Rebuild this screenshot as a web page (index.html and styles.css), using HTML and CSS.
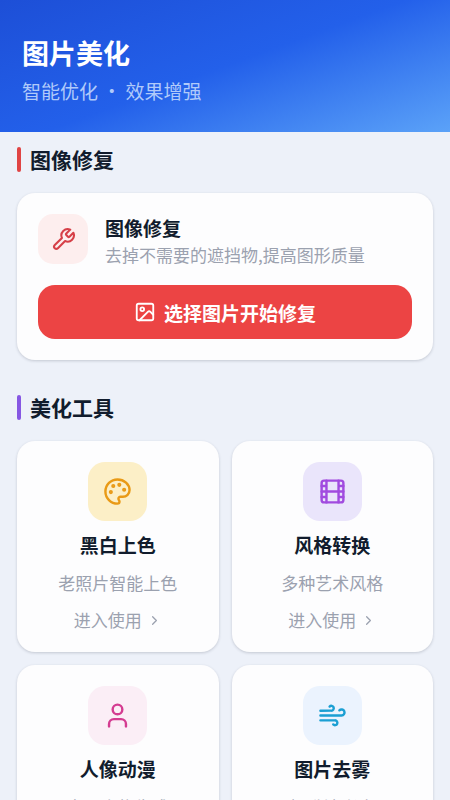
FILE: index.html
```html
<!DOCTYPE html>
<html lang="zh-CN">
<head>
<meta charset="utf-8">
<meta name="viewport" content="width=device-width, initial-scale=1">
<title>图片美化</title>
<link rel="stylesheet" href="styles.css">
</head>
<body>
<header class="hero">
  <h1>图片美化</h1>
  <p>智能优化 · 效果增强</p>
</header>
<main class="content">
  <section class="section">
    <h2 class="section-title repair">图像修复</h2>
    <div class="card repair-card">
      <div class="repair-head">
        <span class="icon-box small red"><svg viewBox="0 0 24 24"><path d="M14.7 6.3a1 1 0 0 0 0 1.4l1.6 1.6a1 1 0 0 0 1.4 0l3.77-3.77a6 6 0 0 1-7.94 7.94l-6.91 6.91a2.12 2.12 0 0 1-3-3l6.91-6.91a6 6 0 0 1 7.94-7.94l-3.76 3.76z"/></svg></span>
        <div>
          <h3>图像修复</h3>
          <p>去掉不需要的遮挡物,提高图形质量</p>
        </div>
      </div>
      <button class="primary" type="button">
        <svg viewBox="0 0 24 24"><rect x="3" y="3" width="18" height="18" rx="2"/><circle cx="9" cy="9" r="2"/><path d="m21 15-3.086-3.086a2 2 0 0 0-2.828 0L6 21"/></svg>
        <span>选择图片开始修复</span>
      </button>
    </div>
  </section>
  <section class="section">
    <h2 class="section-title tools">美化工具</h2>
    <div class="grid">
      <a class="card tool" href="#colorize">
        <span class="icon-box amber"><svg viewBox="0 0 24 24"><circle class="dot" cx="13.5" cy="6.5" r=".7"/><circle class="dot" cx="17.5" cy="10.5" r=".7"/><circle class="dot" cx="8.5" cy="7.5" r=".7"/><circle class="dot" cx="6.5" cy="12.5" r=".7"/><path d="M12 2C6.5 2 2 6.5 2 12s4.5 10 10 10c.926 0 1.648-.746 1.648-1.688 0-.437-.18-.835-.437-1.125-.29-.289-.438-.652-.438-1.125a1.64 1.64 0 0 1 1.668-1.668h1.996c3.051 0 5.555-2.503 5.555-5.554C21.965 6.012 17.461 2 12 2z"/></svg></span>
        <h3>黑白上色</h3>
        <p>老照片智能上色</p>
        <span class="enter">进入使用<svg viewBox="0 0 24 24"><path d="m9 18 6-6-6-6"/></svg></span>
      </a>
      <a class="card tool" href="#style">
        <span class="icon-box violet"><svg viewBox="0 0 24 24"><rect x="3" y="3" width="18" height="18" rx="2"/><path d="M7 3v18M17 3v18M3 7.5h4M3 12h18M3 16.5h4M17 7.5h4M17 16.5h4"/></svg></span>
        <h3>风格转换</h3>
        <p>多种艺术风格</p>
        <span class="enter">进入使用<svg viewBox="0 0 24 24"><path d="m9 18 6-6-6-6"/></svg></span>
      </a>
      <a class="card tool" href="#anime">
        <span class="icon-box pink"><svg viewBox="0 0 24 24"><path d="M19 21v-2a4 4 0 0 0-4-4H9a4 4 0 0 0-4 4v2"/><circle cx="12" cy="7" r="4"/></svg></span>
        <h3>人像动漫</h3>
        <p>卡通人物生成</p>
        <span class="enter">进入使用<svg viewBox="0 0 24 24"><path d="m9 18 6-6-6-6"/></svg></span>
      </a>
      <a class="card tool" href="#dehaze">
        <span class="icon-box sky"><svg viewBox="0 0 24 24"><path d="M17.7 7.7a2.5 2.5 0 1 1 1.8 4.3H2"/><path d="M9.6 4.6A2 2 0 1 1 11 8H2"/><path d="M12.6 19.4A2 2 0 1 0 14 16H2"/></svg></span>
        <h3>图片去雾</h3>
        <p>提升清晰度</p>
        <span class="enter">进入使用<svg viewBox="0 0 24 24"><path d="m9 18 6-6-6-6"/></svg></span>
      </a>
    </div>
  </section>
</main>
</body>
</html>
```
FILE: styles.css
```css
* { box-sizing: border-box; }
body {
  margin: 0;
  background: #edf1f9;
  color: #111c2d;
  font-family: "Noto Sans CJK SC", sans-serif;
}
h1, h2, h3, p { margin: 0; }
svg {
  fill: none;
  stroke: currentColor;
  stroke-width: 2;
  stroke-linecap: round;
  stroke-linejoin: round;
}
.hero {
  padding: 31px 22px 25px;
  color: #fff;
  background: linear-gradient(160deg, #1d4fd7 0%, #2360ea 50%, #5ba2f8 100%);
}
.hero h1 { font-size: 27px; line-height: 44px; font-weight: 700; }
.hero p { font-size: 19px; line-height: 32px; color: #b0cafa; }
.content { padding: 12px 17px 24px; }
.section + .section { margin-top: 32px; }
.section-title {
  display: flex;
  align-items: center;
  gap: 9px;
  margin-bottom: 19px;
  font-size: 21px;
  line-height: 30px;
  font-weight: 700;
}
.section-title::before {
  content: "";
  width: 4px;
  height: 25px;
  border-radius: 2px;
  background: currentColor;
}
.repair::before { background: #e04444; }
.tools::before { background: #8657e3; }
.card {
  background: #fdfdfe;
  border-radius: 18px;
  box-shadow: 0 1px 3px rgb(30 41 59 / 20%);
}
.repair-card { padding: 21px; }
.repair-head {
  display: flex;
  align-items: flex-start;
  gap: 17px;
  margin-bottom: 17px;
}
.repair-head h3 { font-size: 19px; line-height: 28px; }
.repair-head p { font-size: 17px; line-height: 26px; color: #9ba1af; }
.icon-box {
  display: flex;
  flex: none;
  align-items: center;
  justify-content: center;
  width: 59px;
  height: 59px;
  border-radius: 17px;
}
.icon-box svg { width: 29px; height: 29px; }
.icon-box.small { width: 50px; height: 50px; border-radius: 15px; }
.icon-box.small svg { width: 25px; height: 25px; }
.red { background: #fdeeee; color: #d64048; }
.amber { background: #fcefc7; color: #e99a16; }
.violet { background: #eae5fb; color: #a14bdf; }
.pink { background: #fbeef6; color: #d43c91; }
.sky { background: #ebf3fe; color: #1b9fd3; }
.dot { fill: currentColor; }
.primary {
  display: flex;
  align-items: center;
  justify-content: center;
  gap: 8px;
  width: 100%;
  height: 54px;
  padding: 0;
  border: 0;
  border-radius: 17px;
  background: #ec4444;
  color: #fff;
  font: 700 19px/29px "Noto Sans CJK SC", sans-serif;
}
.primary svg { width: 22px; height: 22px; }
.grid {
  display: grid;
  grid-template-columns: 1fr 1fr;
  gap: 13px;
}
.tool {
  display: flex;
  flex-direction: column;
  align-items: center;
  padding: 21px 12px 19px;
  color: inherit;
  text-decoration: none;
}
.tool h3 { margin-top: 10px; font-size: 19px; line-height: 28px; }
.tool p { margin-top: 11px; font-size: 17px; line-height: 26px; color: #9ba1af; }
.enter {
  display: flex;
  align-items: center;
  gap: 5px;
  margin-top: 11px;
  font-size: 17px;
  line-height: 26px;
  color: #9ba1af;
}
.enter svg { width: 15px; height: 15px; }
```
